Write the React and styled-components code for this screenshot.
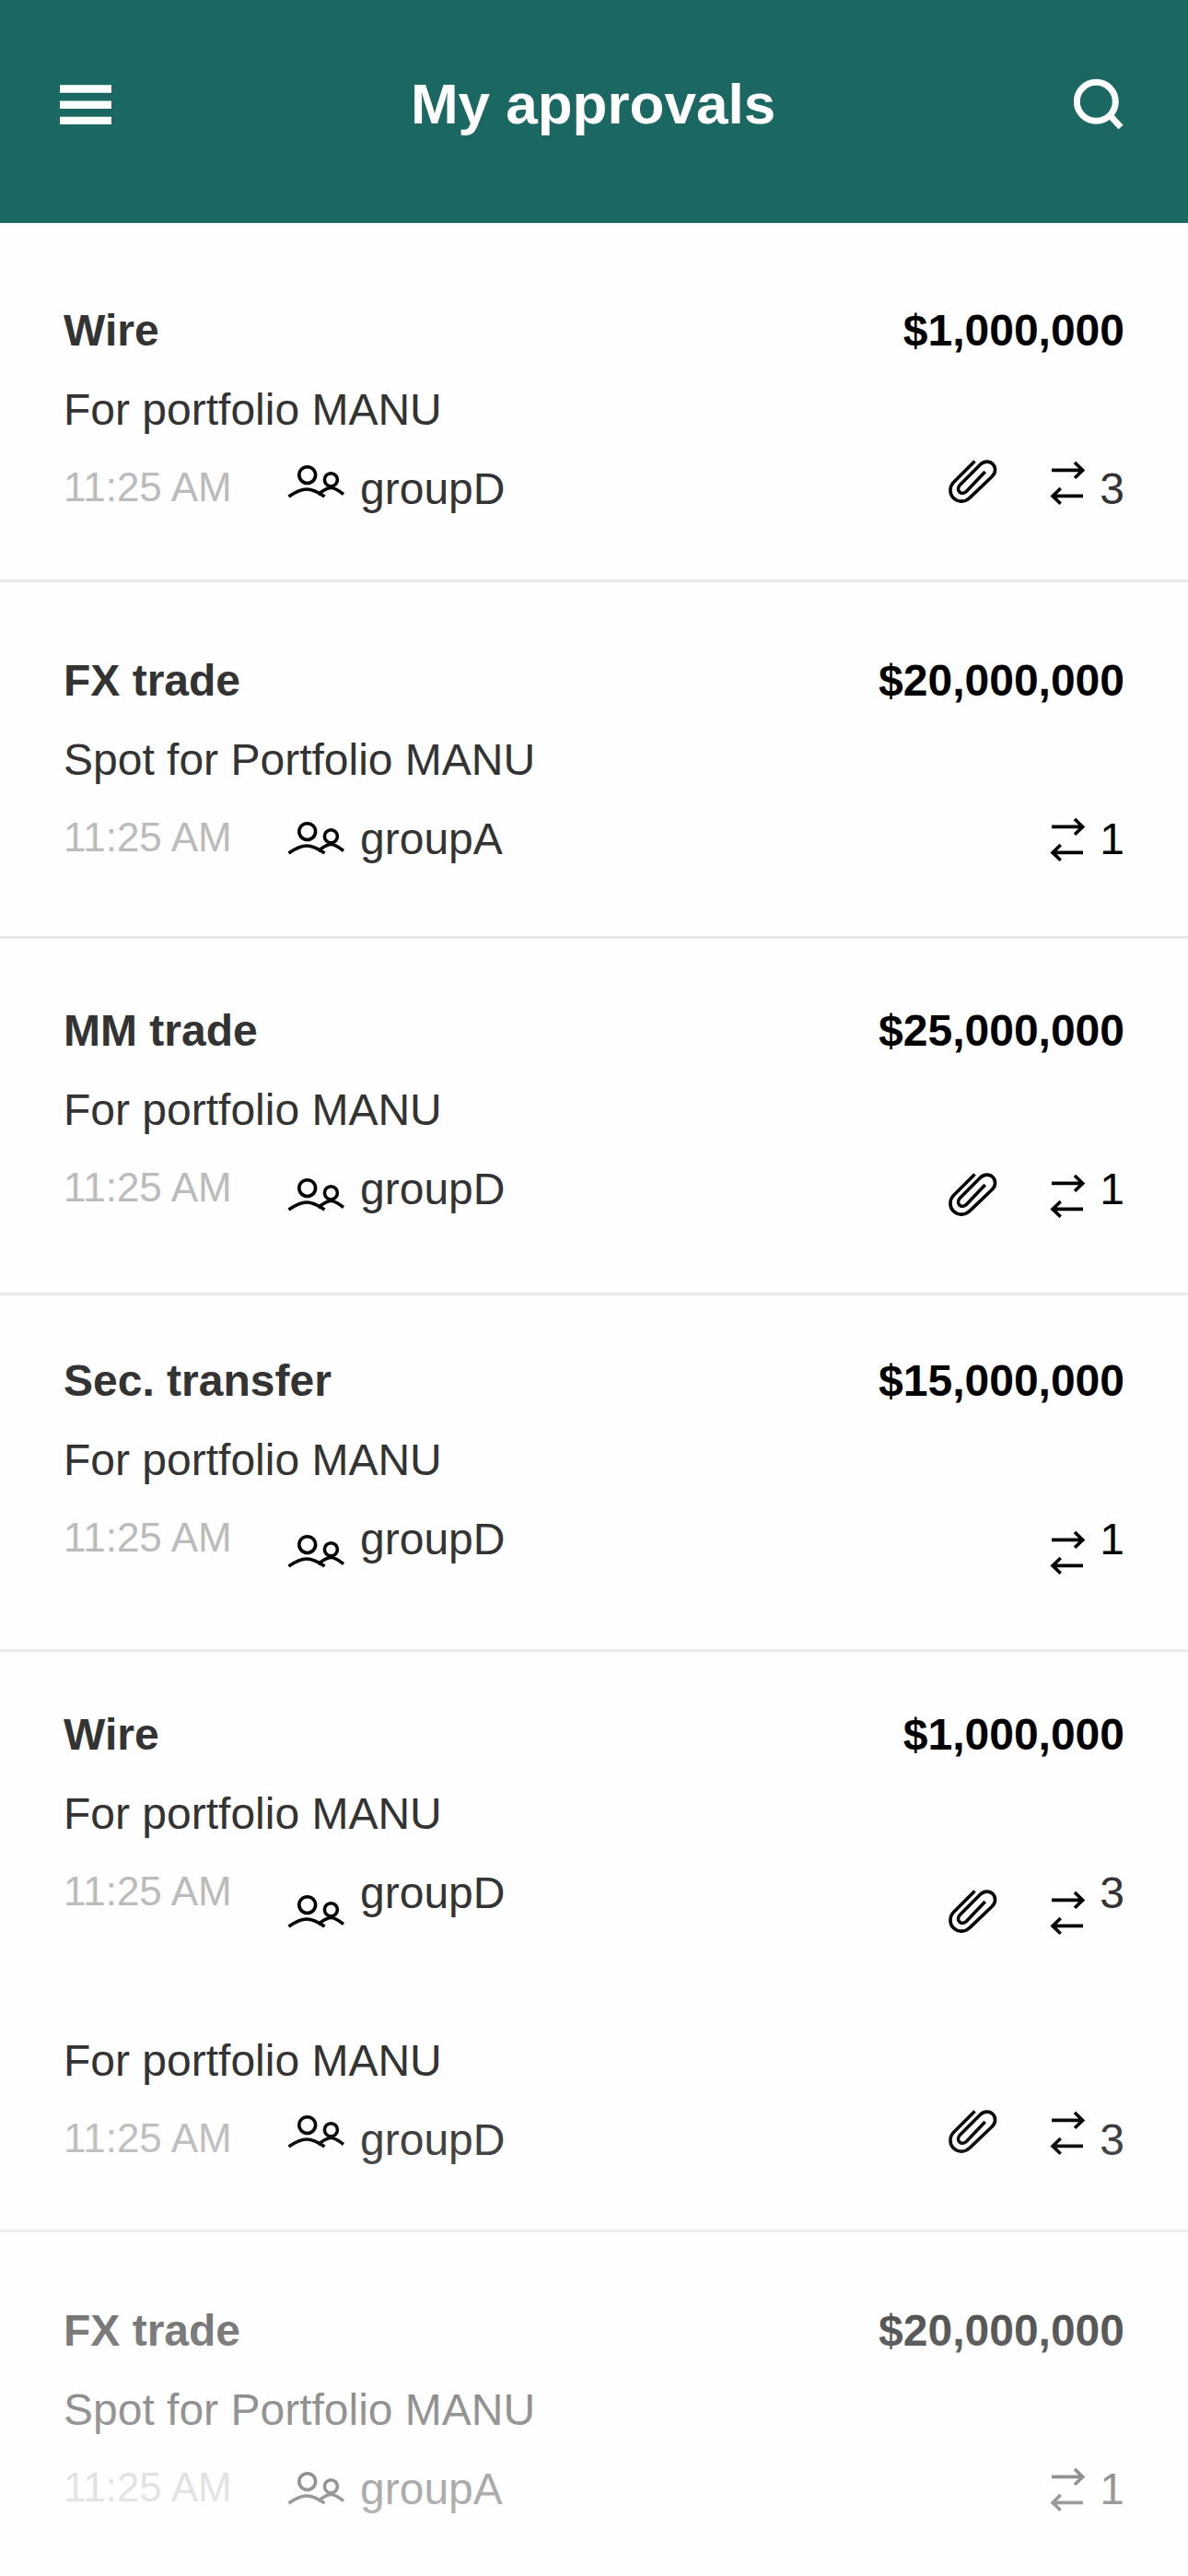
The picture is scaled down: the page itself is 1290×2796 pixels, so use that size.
import styled, { createGlobalStyle } from "styled-components";

const GlobalStyle = createGlobalStyle`
  body {
    margin: 0;
    background-color: #fefefe;
    font-family: "Liberation Sans", Arial, sans-serif;
  }

  * {
    box-sizing: border-box;
  }
`;

const Page = styled.div`
  position: relative;
  min-height: 100vh;
`;

const Header = styled.header`
  display: flex;
  align-items: flex-start;
  justify-content: space-between;
  height: 242px;
  padding: 78px 64px 0;
  background-color: #1a6861;
  color: #fff;
`;

const Heading = styled.h1`
  margin: 0;
  font-size: 62px;
  line-height: 70px;
`;

const IconButton = styled.button`
  display: flex;
  align-items: center;
  height: 70px;
  padding: 0;
  border: none;
  background: none;
  color: inherit;

  svg {
    display: block;
  }
`;

const List = styled.ul`
  margin: 0;
  padding: 3px 0 0;
  list-style: none;
`;

// text and icons share one cell, each with its own rhythm
const Row = styled.li`
  display: grid;
  height: ${({ $height }) => $height || 387}px;
  border-bottom: ${({ $open }) => ($open ? "none" : "3px solid #e9e9e9")};
`;

const Details = styled.div`
  grid-area: 1 / 1;
  padding: ${({ $top }) => $top}px 69px 0;
`;

const Line = styled.div`
  display: flex;
  justify-content: space-between;
  height: 86px;
  font-size: 48px;
  line-height: 56px;
  color: #333;
`;

const Title = styled.h2`
  margin: 0;
  font-size: 48px;
`;

const Amount = styled.strong`
  color: #000;
`;

const Time = styled.time`
  width: 322px;
  font-size: 44px;
  line-height: 52px;
  color: #bbb;
`;

const Group = styled.span`
  flex: 1;
`;

const Count = styled.span`
  color: ${({ $dark }) => ($dark ? "#000" : "#333")};
`;

const Icons = styled.div`
  grid-area: 1 / 1;
  display: flex;
  align-items: flex-start;
  padding: ${({ $top }) => $top}px 112px 0 312px;

  svg {
    display: block;
    overflow: visible;
  }
`;

const Trailing = styled.div`
  display: flex;
  gap: 56px;
  margin-left: auto;
`;

const Fade = styled.div`
  position: absolute;
  right: 0;
  bottom: 0;
  left: 0;
  height: 520px;
  background: linear-gradient(rgba(254, 254, 254, 0), rgba(254, 254, 254, 0.72));
  pointer-events: none;
`;

function MenuIcon() {
  return (
    <svg width="58" height="44" viewBox="0 0 58 44" fill="currentColor">
      <path d="M1 1.300h56v8.400H1zM1 18.600h56v8.400H1zM1 35.800h56v8.400H1z" />
    </svg>
  );
}

function SearchIcon() {
  return (
    <svg width="60" height="56" viewBox="0 0 60 56" fill="none" stroke="currentColor" strokeWidth="7">
      <circle cx="24.300" cy="25.300" r="21" />
      <path d="M39 40l12 13" />
    </svg>
  );
}

function PeopleIcon() {
  return (
    <svg width="62" height="42" viewBox="0 0 62 42" fill="none" stroke="#000" strokeWidth="3.600">
      <circle cx="21.700" cy="15.600" r="8.900" />
      <circle cx="47.400" cy="20.800" r="7" />
      <path d="M1.500 39C8 34.500 15 31 21 31s13 3.500 19.500 8" />
      <path d="M33.500 36.500C38 33.500 42 29.500 47.500 29.500c5 0 9 3.500 13.500 7" />
    </svg>
  );
}

function ClipIcon() {
  return (
    <svg width="54" height="50" viewBox="0 0 54 50" fill="none" stroke="#000" strokeWidth="3.600">
      <path d="M28.500.500L5.700 23.300C.600 28.400.900 36.100 5.300 40.500c4.500 4.500 12.300 5.200 17.400.100L47.200 17.300c4.200-4.200 4.400-9.900.900-13.500-3.600-3.600-9.500-3.700-13.700.500L12.700 26c-2.900 2.900-2.700 6-.800 7.900 2 2 5 1.900 7.600-.700L39.700 12" />
    </svg>
  );
}

function TransferIcon() {
  return (
    <svg width="38" height="50" viewBox="0 0 38 50" fill="none" stroke="#000" strokeWidth="3.600">
      <path d="M2 10.400h34M27 2l8.700 8.400L27 18.800" />
      <path d="M36 38.400H3M11.700 30L3 38.400l8.700 8.400" />
    </svg>
  );
}

const approvals = [
  { title: "Wire", amount: "$1,000,000", text: "For portfolio MANU", group: "groupD", count: 3, clip: true, top: 86 },
  { title: "FX trade", amount: "$20,000,000", text: "Spot for Portfolio MANU", group: "groupA", count: 1, dark: true, top: 79 },
  { title: "MM trade", amount: "$25,000,000", text: "For portfolio MANU", group: "groupD", count: 1, dark: true, clip: true, top: 72 },
  { title: "Sec. transfer", amount: "$15,000,000", text: "For portfolio MANU", group: "groupD", count: 1, dark: true, top: 65 },
  { title: "Wire", amount: "$1,000,000", text: "For portfolio MANU", group: "groupD", count: 3, clip: true, top: 62, iconTop: 259, height: 388, open: true },
  { text: "For portfolio MANU", group: "groupD", count: 3, clip: true, top: 28, iconTop: 110, height: 242 },
  { title: "FX trade", amount: "$20,000,000", text: "Spot for Portfolio MANU", group: "groupA", count: 1, dark: true, top: 79, height: 373, open: true },
];

function Approval({ item }) {
  return (
    <Row $height={item.height} $open={item.open}>
      <Details $top={item.top}>
        {item.title && (
          <Line>
            <Title>{item.title}</Title>
            <Amount>{item.amount}</Amount>
          </Line>
        )}
        <Line>{item.text}</Line>
        <Line>
          <Time>11:25 AM</Time>
          <Group>{item.group}</Group>
          <Count $dark={item.dark}>{item.count}</Count>
        </Line>
      </Details>
      <Icons $top={item.iconTop || 255}>
        <PeopleIcon />
        <Trailing>
          {item.clip && <ClipIcon />}
          <TransferIcon />
        </Trailing>
      </Icons>
    </Row>
  );
}

function App() {
  return (
    <Page>
      <GlobalStyle />
      <Header>
        <IconButton aria-label="Menu">
          <MenuIcon />
        </IconButton>
        <Heading>My approvals</Heading>
        <IconButton aria-label="Search">
          <SearchIcon />
        </IconButton>
      </Header>
      <List>
        {approvals.map((item, index) => (
          <Approval key={index} item={item} />
        ))}
      </List>
      <Fade />
    </Page>
  );
}

export default App;
